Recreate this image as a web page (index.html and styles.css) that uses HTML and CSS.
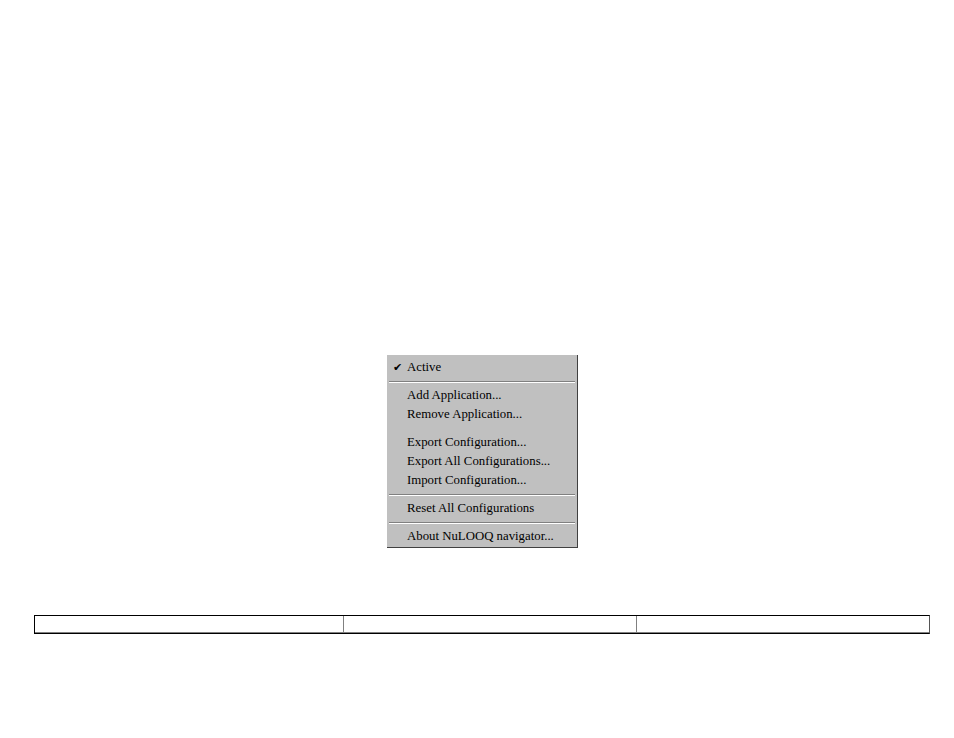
FILE: index.html
```html
<!DOCTYPE html>
<html>
<head>
<meta charset="utf-8">
<link rel="stylesheet" href="styles.css">
</head>
<body>
<div class="page">
  <div class="figure">
    <div class="menu">
      <div class="item checked"><span class="check">✔</span>Active</div>
      <div class="sep"></div>
      <div class="item">Add Application...</div>
      <div class="item">Remove Application...</div>
      <div class="gap"></div>
      <div class="item">Export Configuration...</div>
      <div class="item">Export All Configurations...</div>
      <div class="item">Import Configuration...</div>
      <div class="sep"></div>
      <div class="item">Reset All Configurations</div>
      <div class="sep"></div>
      <div class="item">About NuLOOQ navigator...</div>
    </div>
  </div>
  <table class="grid">
    <tr>
      <td class="c1"></td>
      <td class="c2"></td>
      <td class="c3"></td>
    </tr>
  </table>
</div>
</body>
</html>
```
FILE: styles.css
```css
html, body {
  margin: 0;
  padding: 0;
  background: #ffffff;
}
.page {
  width: 954px;
  height: 738px;
  font-family: "Liberation Serif", "Times New Roman", serif;
}
.figure {
  padding-top: 355px;
  padding-left: 387px;
}
.menu {
  width: 191px;
  height: 193px;
  box-sizing: border-box;
  background: #c0c0c0;
  border-right: 1px solid #404040;
  border-bottom: 1px solid #404040;
  padding: 3px 2px 0 2px;
  display: flex;
  flex-direction: column;
  font-size: 12.8px;
  color: #000;
}
.item {
  height: 19px;
  line-height: 19px;
  padding-left: 18px;
  position: relative;
  white-space: nowrap;
}
.check {
  position: absolute;
  left: 4px;
  top: 0;
  font-size: 11px;
  font-family: "DejaVu Sans", sans-serif;
}
.sep {
  height: 9px;
  display: flex;
  flex-direction: column;
  justify-content: center;
}
.sep::before {
  content: "";
  display: block;
  height: 1px;
  background: #808080;
  border-bottom: 1px solid #ffffff;
}
.gap {
  height: 9px;
}
.grid {
  margin-top: 67px;
  margin-left: 34px;
  width: 896px;
  border-collapse: separate;
  border-spacing: 0;
  border: 1px solid #000;
  border-right-color: #555;
}
.grid td {
  height: 16px;
  padding: 0;
  border: 1px solid #808080;
  border-left: none;
  border-top: none;
}
.grid td.c1 { width: 308px; }
.grid td.c2 { width: 292px; }
.grid td.c3 { border-right: none; }
```
